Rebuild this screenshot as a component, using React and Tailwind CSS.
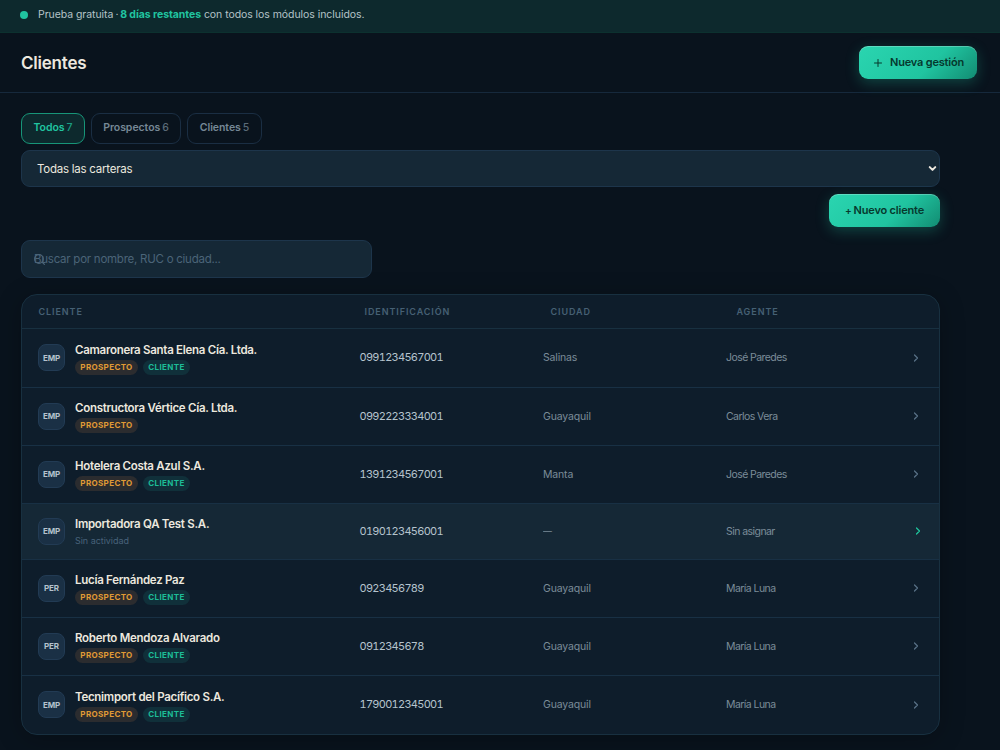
import { ChevronDown, ChevronRight, Plus, Search } from "lucide-react";
import clsx from "clsx";

const tabs = [
    { label: "Todos", count: 7, width: "w-16", active: true },
    { label: "Prospectos", count: 6, width: "w-[90px]" },
    { label: "Clientes", count: 5, width: "w-[75px]" },
];

const clients = [
    { type: "EMP", name: "Camaronera Santa Elena Cía. Ltda.", tags: ["PROSPECTO", "CLIENTE"], ruc: "0991234567001", city: "Salinas", agent: "José Paredes", height: "h-[59px]" },
    { type: "EMP", name: "Constructora Vértice Cía. Ltda.", tags: ["PROSPECTO"], ruc: "0992223334001", city: "Guayaquil", agent: "Carlos Vera", height: "h-[58px]" },
    { type: "EMP", name: "Hotelera Costa Azul S.A.", tags: ["PROSPECTO", "CLIENTE"], ruc: "1391234567001", city: "Manta", agent: "José Paredes", height: "h-[58px]" },
    { type: "EMP", name: "Importadora QA Test S.A.", tags: [], ruc: "0190123456001", city: "—", agent: "Sin asignar", height: "h-[56px]", selected: true },
    { type: "PER", name: "Lucía Fernández Paz", tags: ["PROSPECTO", "CLIENTE"], ruc: "0923456789", city: "Guayaquil", agent: "María Luna", height: "h-[58px]" },
    { type: "PER", name: "Roberto Mendoza Alvarado", tags: ["PROSPECTO", "CLIENTE"], ruc: "0912345678", city: "Guayaquil", agent: "María Luna", height: "h-[58px]" },
    { type: "EMP", name: "Tecnimport del Pacífico S.A.", tags: ["PROSPECTO", "CLIENTE"], ruc: "1790012345001", city: "Guayaquil", agent: "María Luna", height: "h-[58px]" },
];

const primaryButton =
    "flex items-center justify-center whitespace-nowrap rounded-[9px] bg-[linear-gradient(135deg,#2ad5b0_0%,#20c4a0_60%,#128c72_100%)] text-[11px] font-semibold text-[#06382d] shadow-[0_4px_14px_rgba(32,196,160,0.28),inset_0_1px_0_rgba(255,255,255,0.25)]";

function Tag({ label }) {
    const isClient = label === "CLIENTE";
    return (
        <span
            className={clsx(
                "flex h-[15px] items-center justify-center rounded-full pb-px text-[8px] font-bold tracking-[0.36px]",
                isClient ? "w-[47px] bg-[#10303a] text-[#1dbd97]" : "w-[63px] bg-[#2b2c2f] text-[#e09a35]"
            )}
        >
            {label}
        </span>
    );
}

function ClientRow({ client }) {
    return (
        <div
            className={clsx(
                "grid grid-cols-[322px_183px_183px_1fr_auto] items-center border-b border-[#183044] pb-px pl-4 last:border-b-0",
                client.height,
                client.selected ? "bg-[#152836] pr-[15px]" : "pr-[17px]"
            )}
        >
            <div className="flex items-center gap-2.5">
                <div className="flex size-[27px] items-center justify-center rounded-[8px] border border-[#223b54] bg-[#1a3045] text-[8px] font-bold tracking-[-0.1px] text-[#b4c2ce]">
                    {client.type}
                </div>
                <div className="pt-0.5">
                    <p className="whitespace-nowrap text-[11.5px] leading-[15px] font-semibold tracking-[-0.28px] text-[#ece8df]">{client.name}</p>
                    {client.tags.length > 0 ? (
                        <div className="mt-0.5 flex gap-[5px]">
                            {client.tags.map((tag) => (
                                <Tag key={tag} label={tag} />
                            ))}
                        </div>
                    ) : (
                        <p className="mt-[2px] text-[9px] leading-[13px] tracking-[-0.04px] text-[#48627a]">Sin actividad</p>
                    )}
                </div>
            </div>
            <p className="-ml-[0.5px] text-[11px] tracking-[-0.72px] text-[#b5c3cd] tabular-nums">{client.ruc}</p>
            <p className={clsx("pt-px text-[10.5px] text-[#7b8c99]", client.city === "—" ? "origin-left scale-x-85" : "tracking-[-0.16px]")}>{client.city}</p>
            <p className="pt-px text-[10.5px] tracking-[-0.56px] text-[#7b8c99]">{client.agent}</p>
            <ChevronRight size={12} strokeWidth={2.5} className={client.selected ? "text-[#1fc49c]" : "text-[#587186]"} />
        </div>
    );
}

export default function App() {
    return (
        <div className="h-[750px] overflow-hidden bg-[#09131d] font-['Inter',sans-serif] text-[#ece8df]">
            <div className="flex h-[33px] items-center gap-[10px] border-b border-[#0c312f] bg-[#0d292d] pb-[3px] pl-5 text-[10.5px] text-[#b5c3c8]">
                <span className="size-2 rounded-full bg-[#20c4a0]" />
                <p className="whitespace-pre tracking-[-0.06px]">
                    Prueba gratuita<span className="tracking-[-0.7px]"> · </span><b className="font-bold text-[#20c4a0]">8 días restantes</b> con todos los módulos incluidos.
                </p>
            </div>

            <header className="flex h-[60px] items-center justify-between border-b border-[#16293c] pr-[23px] pl-[21px]">
                <h1 className="pt-0.5 text-[17px] font-semibold tracking-[-0.22px]">Clientes</h1>
                <button className={clsx(primaryButton, "h-[33px] w-[118px] gap-[6px]")}>
                    <Plus size={12} strokeWidth={2} />
                    <span className="tracking-[-0.2px]">Nueva gestión</span>
                </button>
            </header>

            <main className="w-[961px] pt-5 pr-[21px] pl-[21px]">
                <div className="flex gap-1.5">
                    {tabs.map((tab) => (
                        <button
                            key={tab.label}
                            className={clsx(
                                "flex h-[31px] items-center justify-center gap-[2px] rounded-[9px] border pb-px text-[10.5px] font-semibold tracking-[-0.05px]",
                                tab.width,
                                tab.active ? "border-[#179578] bg-[#0d292d] text-[#20c4a0]" : "border-[#1a2e43] text-[#768896]"
                            )}
                        >
                            {tab.label}
                            <span className="font-medium opacity-75">{tab.count}</span>
                        </button>
                    ))}
                </div>

                <div className="mt-1.5 flex h-[37px] items-center justify-between rounded-[9px] border border-[#1d354b] bg-[#152836] pr-px pl-[15px]">
                    <span className="pt-0.5 text-[11.5px] tracking-[-0.24px]">Todas las carteras</span>
                    <ChevronDown size={11} strokeWidth={4.5} />
                </div>

                <div className="mt-[7px] flex justify-end">
                    <button className={clsx(primaryButton, "h-[33px] w-[111px] gap-0.5 tracking-[-0.18px]")}>
                        <span className="text-[10px]">+</span>
                        <span>Nuevo cliente</span>
                    </button>
                </div>

                <div className="relative mt-[13px] flex h-[38px] w-[351px] items-center rounded-[9px] border border-[#1d354b] bg-[#152836] pl-3">
                    <Search size={13} strokeWidth={2.25} className="absolute left-[11px] text-[#4b6478]" />
                    <span className="pt-px text-[11.5px] tracking-[-0.25px] text-[#4b6478]">Buscar por nombre, RUC o ciudad...</span>
                </div>

                <section className="mt-4 h-[441px] overflow-hidden rounded-2xl border border-[#183040] bg-[#0e1d2b] shadow-[0_4px_24px_rgba(0,0,0,0.25)]">
                    <div className="grid h-[34px] grid-cols-[326px_186px_186px_1fr] items-center border-b border-[#183040] pl-[16.5px] text-[9px] font-semibold tracking-[0.92px] text-[#466074]">
                        <span>CLIENTE</span>
                        <span>IDENTIFICACIÓN</span>
                        <span>CIUDAD</span>
                        <span>AGENTE</span>
                    </div>
                    {clients.map((client) => (
                        <ClientRow key={client.ruc} client={client} />
                    ))}
                </section>
            </main>
        </div>
    );
}
